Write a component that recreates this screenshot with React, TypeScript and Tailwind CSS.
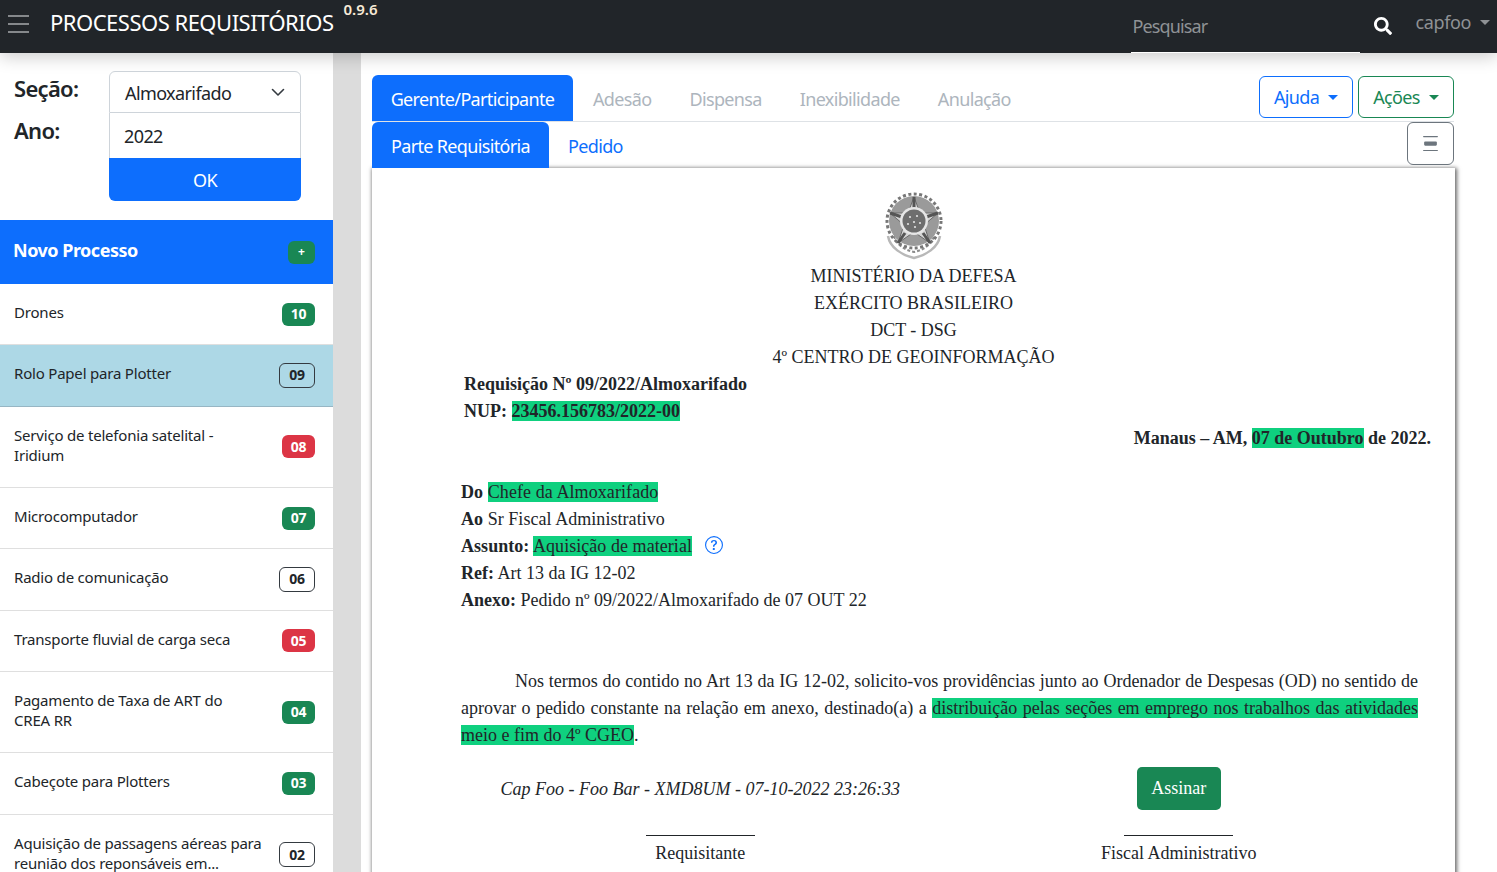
import React from "react";
import { BsDistributeVertical, BsQuestionCircle } from "react-icons/bs";
import { FaSearch } from "react-icons/fa";

type Tone = "green" | "red" | "outline";

interface Processo {
  title: string[];
  num: string;
  tone: Tone;
  active?: boolean;
}

const processos: Processo[] = [
  { title: ["Drones"], num: "10", tone: "green" },
  { title: ["Rolo Papel para Plotter"], num: "09", tone: "outline", active: true },
  { title: ["Serviço de telefonia satelital -", "Iridium"], num: "08", tone: "red" },
  { title: ["Microcomputador"], num: "07", tone: "green" },
  { title: ["Radio de comunicação"], num: "06", tone: "outline" },
  { title: ["Transporte fluvial de carga seca"], num: "05", tone: "red" },
  { title: ["Pagamento de Taxa de ART do", "CREA RR"], num: "04", tone: "green" },
  { title: ["Cabeçote para Plotters"], num: "03", tone: "green" },
  { title: ["Aquisição de passagens aéreas para", "reunião dos reponsáveis em..."], num: "02", tone: "outline" },
];

const Badge = ({ tone, num }: { tone: Tone; num: string }) => {
  if (tone === "outline") {
    return (
      <span className="-my-[3px] flex h-[25px] w-[36px] shrink-0 items-center justify-center rounded-md border border-[#343a40] text-[14px] font-bold text-[#212529]">
        {num}
      </span>
    );
  }
  return (
    <span
      className={
        tone === "green"
          ? "-my-[3px] flex h-[23px] w-[33px] shrink-0 items-center justify-center rounded-md bg-[#198754] text-[14px] font-bold text-white"
          : "-my-[3px] flex h-[23px] w-[33px] shrink-0 items-center justify-center rounded-md bg-[#dc3545] text-[14px] font-bold text-white"
      }
    >
      {num}
    </span>
  );
};

const Caret = ({ className }: { className: string }) => (
  <span className={`inline-block border-x-[5px] border-t-[5px] border-x-transparent ${className}`} />
);

// brasao desenhado a mao, com blur pra parecer a imagem original
const Emblem = () => (
  <svg width="60" height="68" viewBox="0 0 60 68" className="mx-auto block">
    <defs>
      <filter id="fuzzy">
        <feGaussianBlur stdDeviation="0.6" />
      </filter>
    </defs>
    <g filter="url(#fuzzy)">
      <path d="M4 44 C6 56 18 63 30 66 C42 63 54 56 56 44" fill="none" stroke="#b8b8b8" strokeWidth="2.5" />
      <path d="M10 44 C12 52 20 58 30 60 C40 58 48 52 50 44" fill="none" stroke="#8c8c8c" strokeWidth="2" strokeDasharray="3 2" />
      <circle cx="30" cy="29" r="25" fill="#9a9a9a" />
      <circle cx="30" cy="29" r="27" fill="none" stroke="#777" strokeWidth="3" strokeDasharray="3 2.5" />
      <path d="M30 5 L36 21 L54 21 L40 33 L46 51 L30 40 L14 51 L20 33 L6 21 L24 21 Z" fill="#d4d4d4" stroke="#6a6a6a" />
      <path d="M30 5 L30 17 M6 21 L18 25 M54 21 L42 25 M14 51 L21 41 M46 51 L39 41" stroke="#555" strokeWidth="3" />
      <circle cx="30" cy="29" r="14" fill="#e6e6e6" />
      <circle cx="30" cy="29" r="11.5" fill="#6e6e6e" />
      <g fill="#e0e0e0">
        <circle cx="26" cy="25" r="1.1" />
        <circle cx="33" cy="24" r="1.1" />
        <circle cx="30" cy="30" r="1.1" />
        <circle cx="24" cy="32" r="1.1" />
        <circle cx="36" cy="31" r="1.1" />
        <circle cx="31" cy="35" r="1.1" />
      </g>
    </g>
  </svg>
);

const Hl = ({ children }: { children: React.ReactNode }) => <span className="bg-[#0fd07f]">{children}</span>;

export default function App() {
  return (
    <div className="flex h-[872px] flex-col overflow-hidden bg-white font-['Noto_Sans',sans-serif] text-[#212529]">
      {/* navbar */}
      <header className="relative z-10 flex h-[53px] shrink-0 items-start bg-[#212529] shadow-[0_4px_16px_rgba(0,0,0,0.2)]">
        <svg width="21" height="18" viewBox="0 0 21 18" className="ml-[8px] mt-[15px]">
          <path d="M0 1 H21 M0 9 H21 M0 17 H21" stroke="#85888b" strokeWidth="2" />
        </svg>
        <span className="ml-[21px] mt-[7px] text-[22px] leading-[30px] tracking-[-0.5px] text-white">PROCESSOS REQUISITÓRIOS</span>
        <span className="-mt-px ml-[10px] text-[15px] font-semibold leading-[20px] text-[#f7ead6]">0.9.6</span>
        <div className="ml-auto flex h-[53px] w-[229px] items-center border-b border-white pl-[2px] pt-[1px] text-[18px] tracking-[-0.9px] text-[#8f9295]">
          Pesquisar
        </div>
        <FaSearch className="ml-[14px] mt-[17px] text-[18px] text-white" />
        <span className="ml-[24px] mt-[9px] text-[18px] leading-[26px] tracking-[-0.4px] text-[#8f9295]">capfoo</span>
        <Caret className="ml-[9px] mr-[7px] mt-[20px] border-t-[#8f9295]" />
      </header>

      <div className="flex min-h-0 flex-1">
        {/* sidebar */}
        <aside className="w-[333px] shrink-0">
          <div className="flex h-[167px]">
            <div className="w-[109px] pl-[14px] pt-[20px] text-[22px] font-semibold leading-[30px] tracking-[-0.7px]">
              <div>Seção:</div>
              <div className="mt-[12px]">Ano:</div>
            </div>
            <div className="w-[192px] pt-[18px] text-[18px] tracking-[-0.6px]">
              <div className="flex h-[42px] items-center justify-between rounded-t-md border border-[#ced4da] pl-[15px] pr-[14px] pt-[2px]">
                <span>Almoxarifado</span>
                <svg width="16" height="16" viewBox="0 0 16 16" className="-mt-[2px]">
                  <path d="M2.5 5.5 L8 11 L13.5 5.5" fill="none" stroke="#343a40" strokeWidth="1.6" strokeLinecap="round" strokeLinejoin="round" />
                </svg>
              </div>
              <div className="flex h-[45px] items-center border-x border-[#ced4da] pl-[14px] pt-px">2022</div>
              <button className="block h-[43px] w-full rounded-b-md bg-[#0d6efd] pt-px text-white">OK</button>
            </div>
          </div>
          <div className="flex h-[64px] items-center justify-between bg-[#0d6efd] pl-[13px] pr-[18px] text-white">
            <span className="pb-[3px] text-[18px] font-bold tracking-[-0.5px]">Novo Processo</span>
            <span className="flex h-[23px] w-[27px] items-center justify-center rounded-md bg-[#198754] text-[12px] font-bold">+</span>
          </div>
          {processos.map((p) => (
            <div
              key={p.num}
              className={
                p.active
                  ? "flex items-center justify-between border-b border-[#97b6c4] bg-[#add8e6] py-5 pl-[14px] pr-[18px] text-[15px] leading-[20.25px] tracking-[-0.2px]"
                  : "flex items-center justify-between border-b border-[#dfdfdf] py-5 pl-[14px] pr-[18px] text-[15px] leading-[20.25px] tracking-[-0.2px]"
              }
            >
              <div className="-mt-[2px] mb-[2px]">
                {p.title.map((t) => (
                  <div key={t}>{t}</div>
                ))}
              </div>
              <Badge tone={p.tone} num={p.num} />
            </div>
          ))}
        </aside>

        {/* gray divider */}
        <div className="w-[28px] shrink-0 bg-[#dcdcdc]" />

        {/* main */}
        <main className="min-w-0 flex-1 pl-[11px] pr-[43px] pt-[22px]">
          <div className="flex h-[47px] items-start border-b border-[#dee2e6] text-[18px] tracking-[-0.65px]">
            <div className="flex h-[46px] w-[201px] items-center justify-center rounded-t-md bg-[#0d6efd] pt-[2px] text-white">Gerente/Participante</div>
            <div className="flex h-[46px] items-center gap-[38px] pl-[20px] pt-[2px] text-[#adb5bd]">
              <span>Adesão</span>
              <span>Dispensa</span>
              <span>Inexibilidade</span>
              <span>Anulação</span>
            </div>
            <div className="ml-auto flex gap-[5px] pt-px">
              <button className="flex h-[42px] w-[94px] items-center justify-center gap-[9px] rounded-md border border-[#0d6efd] text-[#0d6efd]">
                Ajuda <Caret className="border-t-[#0d6efd]" />
              </button>
              <button className="flex h-[42px] w-[96px] items-center justify-center gap-[9px] rounded-md border border-[#198754] text-[#198754]">
                Ações <Caret className="border-t-[#198754]" />
              </button>
            </div>
          </div>
          <div className="flex h-[46px] items-start text-[18px] tracking-[-0.65px]">
            <div className="flex h-[46px] w-[177px] items-center justify-center rounded-t-md bg-[#0d6efd] pt-[2px] text-white">Parte Requisitória</div>
            <div className="flex h-[46px] items-center pl-[19px] pt-[2px] text-[#0d6efd]">Pedido</div>
            <button className="ml-auto flex h-[43px] w-[47px] items-center justify-center rounded-md border border-[#6c757d] text-[#6c757d]">
              <BsDistributeVertical className="text-[17px]" />
            </button>
          </div>

          {/* documento */}
          <div className="-mr-px h-[720px] pt-[24px] font-['Liberation_Serif',serif] text-[18px] leading-[27px] text-[#212529] shadow-[1px_1px_4px_1px_#6b6b6b]">
            <Emblem />
            <div className="mt-[2.5px] text-center">
              <div>MINISTÉRIO DA DEFESA</div>
              <div>EXÉRCITO BRASILEIRO</div>
              <div>DCT - DSG</div>
              <div>4º CENTRO DE GEOINFORMAÇÃO</div>
            </div>
            <div className="pl-[92px] font-bold">
              <div>Requisição Nº 09/2022/Almoxarifado</div>
              <div>
                NUP: <Hl>23456.156783/2022-00</Hl>
              </div>
            </div>
            <div className="pr-[24px] text-right font-bold">
              Manaus – AM, <Hl>07 de Outubro</Hl> de 2022.
            </div>
            <div className="mt-[27px] pl-[89px] pr-[37px]">
              <div className="tracking-[0.08px]">
                <b>Do</b> <Hl>Chefe da Almoxarifado</Hl>
              </div>
              <div className="tracking-[0.05px]">
                <b>Ao</b> Sr Fiscal Administrativo
              </div>
              <div className="flex items-center tracking-[0.05px]">
                <span>
                  <b>Assunto:</b> <Hl>Aquisição de material</Hl>
                </span>
                <BsQuestionCircle className="-mt-[2px] ml-[13px] text-[18px] text-[#0d6efd]" />
              </div>
              <div>
                <b>Ref:</b> Art 13 da IG 12-02
              </div>
              <div>
                <b>Anexo:</b> Pedido nº 09/2022/Almoxarifado de 07 OUT 22
              </div>
              <p className="mt-[54px] indent-[54px] text-justify">
                Nos termos do contido no Art 13 da IG 12-02, solicito-vos providências junto ao Ordenador de Despesas (OD) no sentido de aprovar o pedido constante na relação em anexo, destinado(a) a{" "}
                <Hl>distribuição pelas seções em emprego nos trabalhos das atividades meio e fim do 4º CGEO</Hl>.
              </p>
              <div className="mt-[18.5px] grid grid-cols-2 text-center">
                <div className="flex h-[43px] items-center justify-center pt-[2px] italic">Cap Foo - Foo Bar - XMD8UM - 07-10-2022 23:26:33</div>
                <div className="flex justify-center">
                  <button className="h-[43px] w-[84px] rounded-[5px] bg-[#198754] text-white">Assinar</button>
                </div>
                <div className="mt-[25px]">
                  <div className="mx-auto w-[109px] border-t border-[#212529]" />
                  <div className="mt-[4px]">Requisitante</div>
                </div>
                <div className="mt-[25px]">
                  <div className="mx-auto w-[109px] border-t border-[#212529]" />
                  <div className="mt-[4px]">Fiscal Administrativo</div>
                </div>
              </div>
            </div>
          </div>
        </main>
      </div>
    </div>
  );
}
